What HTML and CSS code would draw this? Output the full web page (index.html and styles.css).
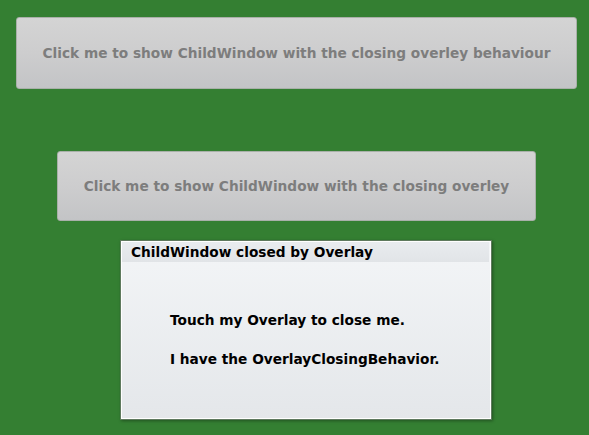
FILE: index.html
```html
<!DOCTYPE html>
<html>
<head>
<meta charset="utf-8">
<link rel="stylesheet" href="styles.css">
</head>
<body>
<div class="page">
  <div class="btn btn-wide">Click me to show ChildWindow with the closing overley behaviour</div>
  <div class="btn btn-narrow">Click me to show ChildWindow with the closing overley</div>
  <div class="window">
    <div class="window-inner">
      <div class="title">ChildWindow closed by Overlay</div>
      <div class="content">
        <p>Touch my Overlay to close me.</p>
        <p>I have the OverlayClosingBehavior.</p>
      </div>
    </div>
  </div>
</div>
</body>
</html>
```

FILE: styles.css
```css
html, body {
  margin: 0;
  padding: 0;
  background: #347f32;
  height: 100%;
}
.page {
  display: flex;
  flex-direction: column;
  align-items: flex-start;
  font-family: "DejaVu Sans", sans-serif;
  font-weight: bold;
  font-size: 13.7px;
}
.btn {
  box-sizing: border-box;
  display: flex;
  align-items: center;
  justify-content: center;
  color: #7d7d7d;
  background: linear-gradient(#d4d4d4, #cdcdce 50%, #c3c4c6);
  border: 1px solid #a9b0a9;
  border-radius: 3px;
}
.btn-wide {
  margin: 17px 0 0 16px;
  width: 561px;
  height: 72px;
}
.btn-narrow {
  margin: 62px 0 0 57px;
  width: 479px;
  height: 70px;
}
.window {
  box-sizing: border-box;
  margin: 19px 0 0 120px;
  width: 372px;
  height: 180px;
  border: 1px solid #5f7a5e;
  box-shadow: 1px 1px 3px rgba(0,0,0,0.35);
  background: #fff;
  padding: 1px;
}
.window-inner {
  height: 100%;
  display: flex;
  flex-direction: column;
  background: linear-gradient(#f3f5f7, #e4e7ea);
}
.title {
  height: 20px;
  line-height: 20px;
  padding-left: 9px;
  margin-right: 1px;
  background: linear-gradient(#e9ecef, #e1e4e7);
  color: #000;
}
.content {
  padding: 49px 0 0 48px;
  color: #000;
}
.content p {
  margin: 0 0 20px 0;
  line-height: 19px;
}
```
